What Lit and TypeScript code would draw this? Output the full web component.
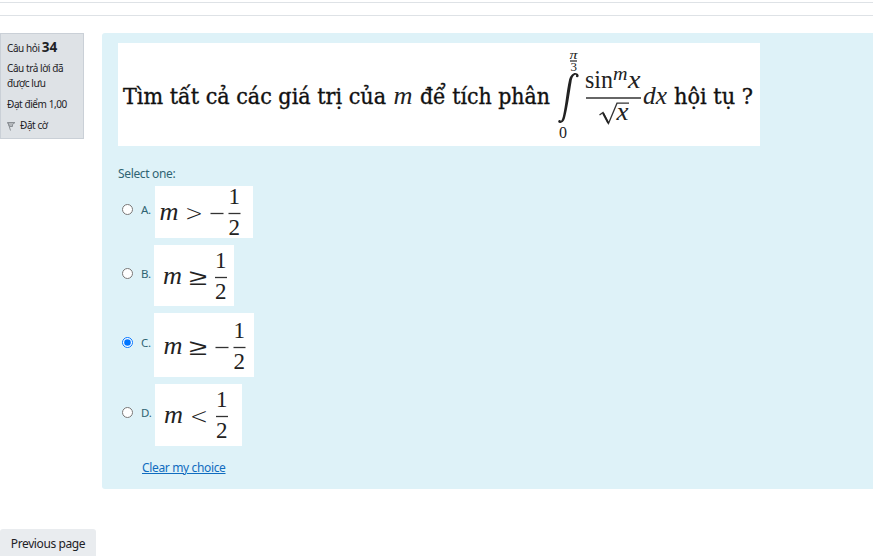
import { LitElement, html, svg, css, nothing } from "lit";
import { customElement, property, state } from "lit/decorators.js";

const glyph = (text: string, x: number, y: number, size: number, width: number, cls = "") =>
  svg`<text class=${cls} x=${x} y=${y} font-size=${size} textLength=${width} lengthAdjust="spacingAndGlyphs">${text}</text>`;

const bar = (x1: number, x2: number, y: number) =>
  svg`<line x1=${x1} x2=${x2} y1=${y} y2=${y} />`;

const mathStyles = css`
  svg { display: block; background: #fff; overflow: visible; }
  text { font-family: "Liberation Serif", "Times New Roman", serif; fill: #222; }
  .it { font-style: italic; }
  .prose { font-family: "DejaVu Serif Condensed", "DejaVu Serif", serif; fill: #111; stroke: #111; stroke-width: 0.35px; }
  .rel { font-family: "DejaVu Sans", sans-serif; font-weight: 200; }
  line, .stroke { stroke: #333; stroke-width: 1.3px; fill: none; }
  .heavy { stroke: #222; stroke-width: 2px; fill: none; }
`;

@customElement("question-formula")
class QuestionFormula extends LitElement {
  static styles = [mathStyles, css`:host { display: block; }
    .solid { fill: #222; }`];

  render() {
    return html`<svg width="642" height="103" viewBox="0 0 642 103">
      ${glyph("Tìm tất cả các giá trị của", 5, 61, 22.5, 263, "prose")}
      ${glyph("m", 275.5, 61, 25, 19, "it")}
      ${glyph("để tích phân", 302, 61, 22.5, 130, "prose")}
      ${glyph("π", 451.5, 16, 13, 8, "it")}
      ${bar(452, 459, 18)}
      ${glyph("3", 452.5, 28, 12, 6.5)}
      <path class="solid" d="M460 33.5C458.5 30.5 454.5 30.5 453.5 39C451.5 51 449.5 66 447 75C445.5 80 442 81 440.2 78.8C442.5 79.5 444 77.5 445 73C447.5 62 448.5 48 451 37C453 29.5 458.5 28.5 460.5 32Z" />
      <circle class="solid" cx="459.2" cy="33" r="1.3" /><circle class="solid" cx="441.6" cy="78.4" r="1.3" />
      ${glyph("0", 441, 95, 16, 8)}
      ${glyph("sin", 467, 45, 25, 28)}
      ${glyph("m", 495, 37, 18, 14.5, "it")}
      ${glyph("x", 510, 45, 25, 12.5, "it")}
      ${bar(468, 523, 55)}
      <path class="stroke" d="M481.5 72L485 69.5L490.5 80.5L499 60.2H511" />
      <path class="heavy" d="M485 70L490.3 80" />
      ${glyph("x", 498.5, 76.5, 25, 12, "it")}
      ${glyph("dx", 525, 61, 25, 24, "it")}
      ${glyph("hội tụ ?", 556, 61, 22.5, 79, "prose")}
    </svg>`;
  }
}

interface Option {
  letter: string;
  rel: string;
  negative: boolean;
  w: number;
  h: number;
  mx: number;
  baseline: number;
  relX: number;
  fracX: number;
  axis: number;
  indent: number;
}

@customElement("answer-formula")
class AnswerFormula extends LitElement {
  @property({ attribute: false }) option!: Option;

  static styles = [mathStyles, css`:host { display: block; }`];

  render() {
    const o = this.option;
    return html`<svg width=${o.w} height=${o.h} viewBox="0 0 ${o.w} ${o.h}">
      ${glyph("m", o.mx, o.baseline, 25, 19, "it")}
      ${glyph(o.rel, o.relX - 2, o.baseline + 1, 23, 18, "rel")}
      ${o.negative ? bar(o.fracX - 18, o.fracX - 5, o.axis) : nothing}
      ${glyph("1", o.fracX, o.axis - 9.5, 23, 11.5)}
      ${bar(o.fracX, o.fracX + 12, o.axis)}
      ${glyph("2", o.fracX, o.axis + 21.5, 23, 11.5)}
    </svg>`;
  }
}

const options: Option[] = [
  { letter: "A.", rel: ">", negative: true, w: 98, h: 52, mx: 4.5, baseline: 34, relX: 32, fracX: 73.5, axis: 27.5, indent: 1 },
  { letter: "B.", rel: "≥", negative: false, w: 80, h: 61, mx: 9, baseline: 39, relX: 37, fracX: 61, axis: 32.5, indent: 0 },
  { letter: "C.", rel: "≥", negative: true, w: 100, h: 64, mx: 9.5, baseline: 40.5, relX: 37, fracX: 79.5, axis: 34.5, indent: 0 },
  { letter: "D.", rel: "<", negative: false, w: 87, h: 62, mx: 9, baseline: 39, relX: 37, fracX: 61, axis: 32.5, indent: 1 },
];

@customElement("app-root")
class AppRoot extends LitElement {
  @state() private selected = 2;

  static styles = css`
    :host {
      display: block; height: 556px; overflow: hidden; background: #fff;
      font-family: "Noto Sans", "Open Sans", sans-serif; color: #1d2125;
    }
    * { box-sizing: border-box; }
    .rules { height: 14px; margin-top: 2px; border: solid #dee2e6; border-width: 1px 0; }
    .question { display: flex; gap: 18px; margin-top: 17px; align-items: flex-start; }
    .info {
      width: 84px; height: 106px; flex: none; padding: 5px 0 0 6px;
      background: #dee2e6; border: 1px solid #cad0d7;
      font-size: 10px; line-height: 15px; letter-spacing: -0.42px; white-space: nowrap;
    }
    .info p { margin: 0 0 6px; }
    .info .head { line-height: 17px; margin-bottom: 4px; }
    .info b { font-size: 13.5px; letter-spacing: 0; }
    .flag { display: flex; align-items: center; gap: 4px; }
    .content { flex: 1; height: 456px; padding: 10px 16px; background: #def2f8; border-radius: 3px 0 0 3px; }
    .prompt { margin-top: 19px; height: 18px; font-size: 12px; line-height: 18px; color: #2f6473; letter-spacing: -0.35px; }
    .answers { display: flex; flex-direction: column; gap: 7px; margin-top: 3px; }
    .answer { display: flex; align-items: center; }
    .answer input { width: 11px; height: 11px; margin: 0 8px 5px 4px; flex: none; }
    .letter { width: 13px; font-size: 11.5px; line-height: 16px; color: #2f6473; margin-bottom: 4px; letter-spacing: -0.3px; }
    .picture { padding-left: var(--indent); }
    .clear { display: inline-block; margin: 13px 0 0 24px; font-size: 12px; line-height: 18px; letter-spacing: -0.35px; color: #0f6cbf; text-decoration: underline; }
    .previous {
      display: block; width: 96px; height: 32px; margin-top: 40px; padding: 0 0 3px; border: 0;
      border-radius: 3px; background: #e9ecef; color: #1d2125; font: 12px "Noto Sans", sans-serif; letter-spacing: -0.4px;
    }
  `;

  render() {
    return html`
      <div class="rules"></div>
      <div class="question">
        <aside class="info">
          <p class="head">Câu hỏi <b>34</b></p>
          <p>Câu trả lời đã<br />được lưu</p>
          <p>Đạt điểm 1,00</p>
          <div class="flag">
            <svg width="9" height="10" viewBox="0 0 9 10" fill="none" stroke="#8a8f94">
              <path fill="#b4b8bc" d="M.5 1.5H8L5.5 3.5V5.5H2.5Z" /><path d="M1 1.5L3.5 9.5" />
            </svg>
            Đặt cờ
          </div>
        </aside>
        <main class="content">
          <question-formula></question-formula>
          <div class="prompt">Select one:</div>
          <div class="answers">
            ${options.map((o, i) => html`
              <label class="answer">
                <input type="radio" name="answer" .checked=${this.selected === i} @change=${() => (this.selected = i)} />
                <span class="letter">${o.letter}</span>
                <answer-formula class="picture" style="--indent:${o.indent}px" .option=${o}></answer-formula>
              </label>`)}
          </div>
          <a class="clear" @click=${() => (this.selected = -1)}>Clear my choice</a>
        </main>
      </div>
      <button class="previous">Previous page</button>
    `;
  }
}
